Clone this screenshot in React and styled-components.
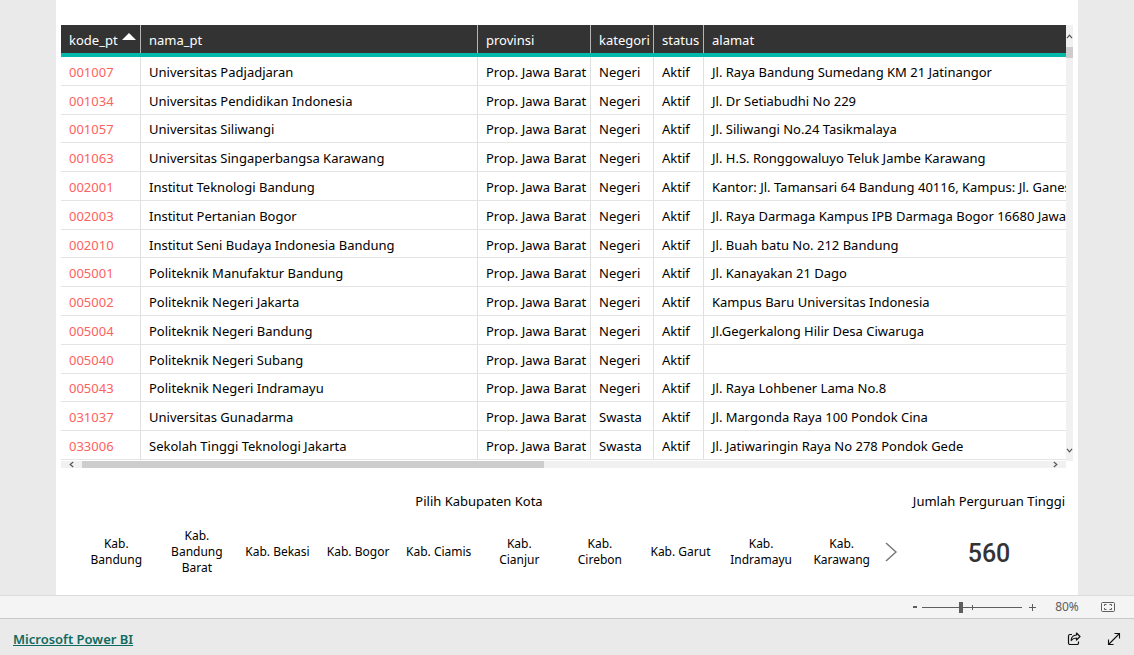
import React, { useState } from "react";
import styled, { createGlobalStyle } from "styled-components";

const GlobalStyle = createGlobalStyle`
  * {
    box-sizing: border-box;
  }

  body {
    margin: 0;
    background: #eaeaea;
    color: #000;
    font: 13px/16px "Noto Sans", "Open Sans", sans-serif;
  }

  button {
    margin: 0;
    padding: 0;
    border: 0;
    background: none;
    color: inherit;
    font: inherit;
    cursor: pointer;
  }
`;

const rows = [
  ["001007", "Universitas Padjadjaran", "Negeri", "Jl. Raya Bandung Sumedang KM 21 Jatinangor"],
  ["001034", "Universitas Pendidikan Indonesia", "Negeri", "Jl. Dr Setiabudhi No 229"],
  ["001057", "Universitas Siliwangi", "Negeri", "Jl. Siliwangi No.24 Tasikmalaya"],
  ["001063", "Universitas Singaperbangsa Karawang", "Negeri", "Jl. H.S. Ronggowaluyo Teluk Jambe Karawang"],
  ["002001", "Institut Teknologi Bandung", "Negeri", "Kantor: Jl. Tamansari 64 Bandung 40116, Kampus: Jl. Ganes"],
  ["002003", "Institut Pertanian Bogor", "Negeri", "Jl. Raya Darmaga Kampus IPB Darmaga Bogor 16680 Jawa"],
  ["002010", "Institut Seni Budaya Indonesia Bandung", "Negeri", "Jl. Buah batu No. 212 Bandung"],
  ["005001", "Politeknik Manufaktur Bandung", "Negeri", "Jl. Kanayakan 21 Dago"],
  ["005002", "Politeknik Negeri Jakarta", "Negeri", "Kampus Baru Universitas Indonesia"],
  ["005004", "Politeknik Negeri Bandung", "Negeri", "Jl.Gegerkalong Hilir Desa Ciwaruga"],
  ["005040", "Politeknik Negeri Subang", "Negeri", ""],
  ["005043", "Politeknik Negeri Indramayu", "Negeri", "Jl. Raya Lohbener Lama No.8"],
  ["031037", "Universitas Gunadarma", "Swasta", "Jl. Margonda Raya 100 Pondok Cina"],
  ["033006", "Sekolah Tinggi Teknologi Jakarta", "Swasta", "Jl. Jatiwaringin Raya No 278 Pondok Gede"],
];

const kabupaten = [
  "Kab. Bandung",
  "Kab. Bandung Barat",
  "Kab. Bekasi",
  "Kab. Bogor",
  "Kab. Ciamis",
  "Kab. Cianjur",
  "Kab. Cirebon",
  "Kab. Garut",
  "Kab. Indramayu",
  "Kab. Karawang",
];

const Page = styled.div`
  display: flex;
  flex-direction: column;
  min-height: 100vh;
`;

const Report = styled.main`
  flex: 1;
  margin: 0 56px;
  padding: 25px 5px 0;
  background: #fff;
`;

const TableVisual = styled.section`
  display: grid;
  grid-template-columns: minmax(0, 1fr) 7px;
  grid-template-rows: auto 7px;
`;

const TableClip = styled.div`
  overflow: hidden;
  padding-bottom: 1px;
`;

const Table = styled.table`
  width: 100%;
  height: 435px;
  table-layout: fixed;
  border-collapse: separate;
  border-spacing: 0;
  font-size: 13px;
  line-height: 16px;
`;

const Col = styled.col`
  width: ${p => (p.$width ? `${p.$width}px` : "auto")};
`;

const HeadCell = styled.th`
  height: 32px;
  padding: 2px 0 0 8px;
  border-bottom: 4px solid #01b8aa;
  background: #333;
  box-shadow: ${p => (p.$last ? "none" : "inset -1px 0 #b5b5b5")};
  color: #fff;
  font-weight: 400;
  text-align: left;
  white-space: nowrap;
`;

const SortButton = styled.button`
  display: flex;
  gap: 4px;

  svg {
    display: block;
  }
`;

const Cell = styled.td`
  padding: 2px 0 0 8px;
  border-bottom: 1px solid #e4e4e4;
  border-right: ${p => (p.$last ? 0 : 1)}px solid #e0e0e0;
  color: ${p => (p.$code ? "#fd625e" : "#000")};
  white-space: nowrap;
`;

const ScrollTrack = styled.div`
  display: flex;
  flex-direction: ${p => (p.$vertical ? "column" : "row")};
  justify-content: space-between;
  background: #f1f1f1;
`;

const ScrollArrow = styled.button`
  display: grid;
  place-items: center;
  flex: none;
  width: ${p => (p.$vertical ? 7 : 21)}px;
  height: ${p => (p.$vertical ? 22 : 7)}px;
`;

const ScrollThumb = styled.div`
  flex: ${p => (p.$vertical ? "0 0 11px" : "0 0 46%")};
  margin: ${p => (p.$vertical ? "0 0 auto" : "0 auto 0 0")};
  background: #cdcdcd;
`;

const BottomRow = styled.div`
  display: flex;
  padding-top: 24px;
`;

const Slicer = styled.section`
  flex: 1;
  min-width: 0;
`;

const VisualTitle = styled.h2`
  margin: 0;
  font-size: 13px;
  font-weight: 400;
  line-height: 18px;
  text-align: center;
  white-space: nowrap;
`;

const SlicerBody = styled.div`
  display: flex;
  align-items: center;
  height: 84px;
  padding-left: 15px;
`;

const SlicerItems = styled.div`
  flex: 1;
  display: grid;
  grid-template-columns: repeat(10, minmax(0, 1fr));
`;

const SlicerItem = styled.button`
  min-height: 52px;
  padding: 0 7px;
  font-size: 12px;
  line-height: 16px;
  text-align: center;
`;

const NextButton = styled.button`
  display: grid;
  place-items: center end;
  width: 15px;
  height: 32px;
`;

const Card = styled.section`
  width: 176px;
  padding-left: 8px;
`;

const CardValue = styled.div`
  display: grid;
  place-items: center;
  height: 85px;
  padding-top: 2px;
  color: #333;
  font: 500 25px/32px Roboto, sans-serif;
`;

const ZoomBar = styled.div`
  display: flex;
  align-items: center;
  justify-content: flex-end;
  height: 24px;
  padding-right: 13px;
  border-top: 1px solid #dcdcdc;
  border-bottom: 1px solid #c8c8c8;
  background: #f4f4f4;
  color: #605e5c;
`;

const ZoomButton = styled.button`
  display: grid;
  place-items: center;
  width: ${p => p.$width}px;
  height: 20px;
`;

const Slider = styled.input`
  appearance: none;
  width: 100px;
  height: 12px;
  margin: 0 3px;
  background:
    linear-gradient(#605e5c, #605e5c) center / 100% 1px no-repeat,
    linear-gradient(#605e5c, #605e5c) center / 1px 5px no-repeat;

  &::-webkit-slider-thumb {
    appearance: none;
    width: 4px;
    height: 11px;
    background: #605e5c;
  }
`;

const ZoomValue = styled.button`
  width: 56px;
  font-size: 12px;
`;

const Footer = styled.footer`
  display: flex;
  align-items: center;
  justify-content: space-between;
  height: 36px;
  padding: 3px 13px 0;
`;

const BrandLink = styled.a`
  color: #0f6a60;
  font-size: 13px;
  font-weight: 600;
  line-height: 18px;
  text-decoration: underline;
`;

const FooterActions = styled.div`
  display: flex;
  gap: 26px;

  svg {
    display: block;
  }
`;

function Arrow({ d, width, height }) {
  return (
    <svg width={width} height={height} fill="none" stroke="#555" strokeWidth="1.2">
      <path d={d} />
    </svg>
  );
}

function UniversityTable() {
  return (
    <TableVisual>
      <TableClip>
        <Table>
          <colgroup>
            <Col $width={80} />
            <Col $width={337} />
            <Col $width={113} />
            <Col $width={63} />
            <Col $width={50} />
            <Col />
          </colgroup>
          <thead>
            <tr>
              <HeadCell>
                <SortButton>
                  kode_pt
                  <svg width="14" height="9" fill="#fff">
                    <path d="M0 8 7 1l7 7z" />
                  </svg>
                </SortButton>
              </HeadCell>
              <HeadCell>nama_pt</HeadCell>
              <HeadCell>provinsi</HeadCell>
              <HeadCell>kategori</HeadCell>
              <HeadCell>status</HeadCell>
              <HeadCell $last>alamat</HeadCell>
            </tr>
          </thead>
          <tbody>
            {rows.map(([kode, nama, kategori, alamat]) => (
              <tr key={kode}>
                <Cell $code>{kode}</Cell>
                <Cell>{nama}</Cell>
                <Cell>Prop. Jawa Barat</Cell>
                <Cell>{kategori}</Cell>
                <Cell>Aktif</Cell>
                <Cell $last>{alamat}</Cell>
              </tr>
            ))}
          </tbody>
        </Table>
      </TableClip>
      <ScrollTrack $vertical>
        <ScrollArrow $vertical aria-label="Scroll up">
          <Arrow width={7} height={5} d="M1 4.2 3.5 1.2 6 4.2" />
        </ScrollArrow>
        <ScrollThumb $vertical />
        <ScrollArrow $vertical aria-label="Scroll down">
          <Arrow width={7} height={5} d="M1 .8 3.5 3.8 6 .8" />
        </ScrollArrow>
      </ScrollTrack>
      <ScrollTrack>
        <ScrollArrow aria-label="Scroll left">
          <Arrow width={5} height={7} d="M4.2 1 1.2 3.5 4.2 6" />
        </ScrollArrow>
        <ScrollThumb />
        <ScrollArrow aria-label="Scroll right">
          <Arrow width={5} height={7} d="M.8 1 3.8 3.5.8 6" />
        </ScrollArrow>
      </ScrollTrack>
    </TableVisual>
  );
}

function ZoomControls() {
  const [zoom, setZoom] = useState(39);

  return (
    <ZoomBar>
      <ZoomButton $width={8} aria-label="Zoom out" onClick={() => setZoom(zoom - 1)}>
        <svg width="6" height="2" fill="#605e5c">
          <path d="M1 0h4v2H1z" />
        </svg>
      </ZoomButton>
      <Slider
        type="range"
        aria-label="Zoom"
        value={zoom}
        onChange={e => setZoom(Number(e.target.value))}
      />
      <ZoomButton $width={14} aria-label="Zoom in" onClick={() => setZoom(zoom + 1)}>
        <svg width="9" height="9" stroke="#605e5c">
          <path d="M1 4.5h7M4.5 1v7" />
        </svg>
      </ZoomButton>
      <ZoomValue>80%</ZoomValue>
      <ZoomButton $width={26} aria-label="Fit to page">
        <svg width="16" height="12" fill="none" stroke="#605e5c">
          <rect x="1.5" y="1.5" width="13" height="9" rx="1" />
          <path d="M4.5 5V3.5h2M9.500 3.5h2V5M11.500 7v1.5h-2M6.500 8.5h-2V7" />
        </svg>
      </ZoomButton>
    </ZoomBar>
  );
}

export default function App() {
  return (
    <Page>
      <GlobalStyle />
      <Report>
        <UniversityTable />
        <BottomRow>
          <Slicer>
            <VisualTitle>Pilih Kabupaten Kota</VisualTitle>
            <SlicerBody>
              <SlicerItems>
                {kabupaten.map(name => (
                  <SlicerItem key={name}>{name}</SlicerItem>
                ))}
              </SlicerItems>
              <NextButton aria-label="Next">
                <svg width="13" height="22" fill="none" stroke="#777" strokeWidth="1.5">
                  <path d="M2 2 12 11 2 20" />
                </svg>
              </NextButton>
            </SlicerBody>
          </Slicer>
          <Card>
            <VisualTitle>Jumlah Perguruan Tinggi</VisualTitle>
            <CardValue>560</CardValue>
          </Card>
        </BottomRow>
      </Report>
      <ZoomControls />
      <Footer>
        <BrandLink href="#">Microsoft Power BI</BrandLink>
        <FooterActions>
          <button aria-label="Share">
            <svg width="14" height="14" fill="none" stroke="#111" strokeWidth="1.2" strokeLinejoin="round">
              <path d="M5 2.5H3A1.5 1.5 0 0 0 1.5 4v7A1.5 1.5 0 0 0 3 12.5h7a1.5 1.5 0 0 0 1.5-1.5V9.5" />
              <path d="M9.5 1 13 4.5 9.5 8V6C7 6 5.5 6.800 4.2 8.500 4.300 5.300 6.300 3.200 9.500 3z" />
            </svg>
          </button>
          <button aria-label="Full screen">
            <svg width="14" height="14" fill="none" stroke="#111" strokeWidth="1.1">
              <path d="M1.5 12.5l11-11M7.500 1.5h5v5M1.5 7.500v5h5" />
            </svg>
          </button>
        </FooterActions>
      </Footer>
    </Page>
  );
}
